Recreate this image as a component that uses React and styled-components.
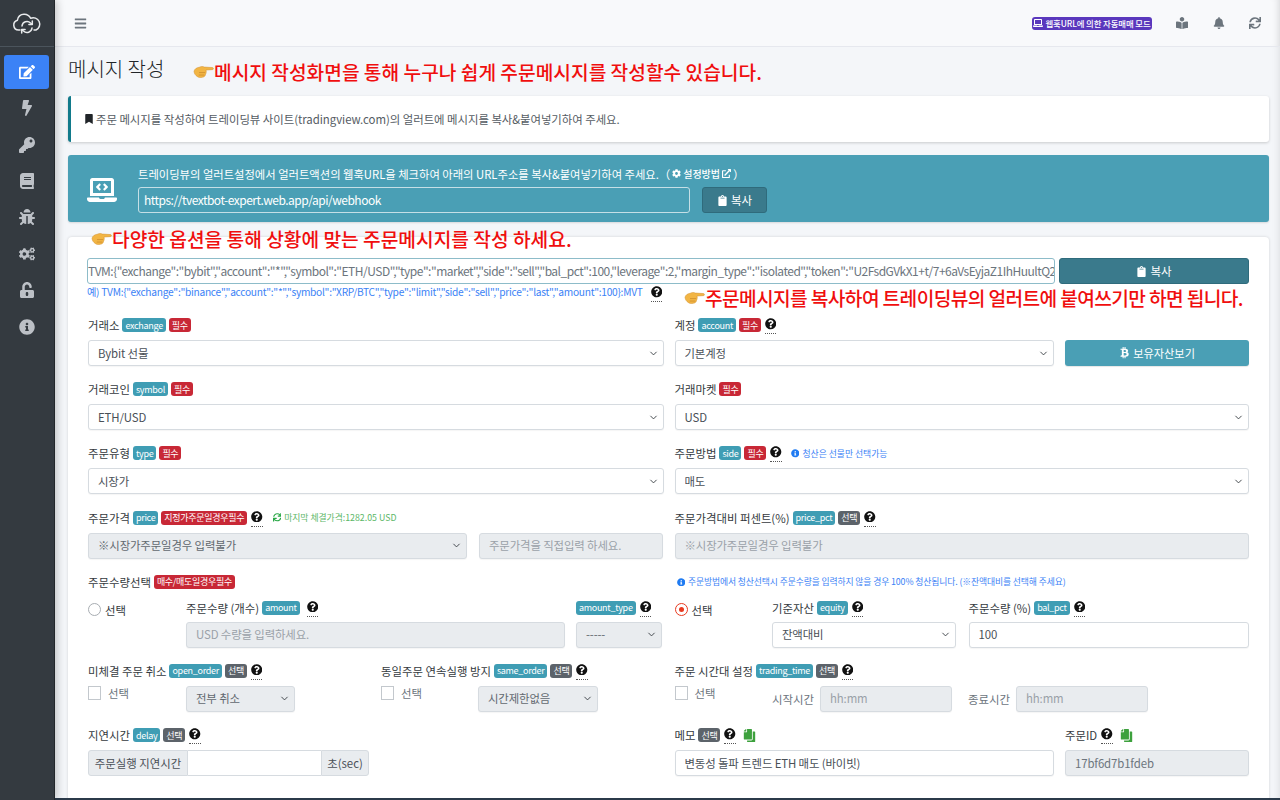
import React from "react";
import styled, { createGlobalStyle } from "styled-components";
import {
  FaBars, FaBell, FaBook, FaBolt, FaBookmark, FaBookReader, FaBtc, FaBug, FaClipboard, FaCog, FaCogs, FaCopy,
  FaEdit, FaExternalLinkAlt, FaInfoCircle, FaKey, FaLaptop, FaLaptopCode, FaQuestionCircle, FaSync, FaUnlockAlt,
} from "react-icons/fa";

const FONT = `"Noto Sans CJK KR", "Noto Sans", sans-serif`;
const CHEVRON = `url("data:image/svg+xml,%3Csvg xmlns='http://www.w3.org/2000/svg' viewBox='0 0 16 16'%3E%3Cpath fill='none' stroke='%23343a40' stroke-linecap='round' stroke-linejoin='round' stroke-width='1.6' d='M3 5.5l5 5 5-5'/%3E%3C/svg%3E")`;

const Global = createGlobalStyle`
  * { box-sizing: border-box; }
  html, body { margin: 0; height: 100%; overflow: hidden; }
  body { font-family: ${FONT}; color: #343a40; background: #f4f6f9; }
`;

const Shell = styled.div`
  display: flex; width: 1280px; height: 800px; overflow: hidden;
`;
const Sidebar = styled.aside`
  width: 55px; flex: none; background: #343a40; border-right: 1px solid #23272b;
  display: flex; flex-direction: column; align-items: center;
  box-shadow: 2px 0 8px rgba(0,0,0,.22); z-index: 2;
`;
const Logo = styled.div`
  width: 100%; height: 47px; display: flex; align-items: center; justify-content: center;
  border-bottom: 1px solid #4b545c;
`;
const Nav = styled.nav`
  display: flex; flex-direction: column; align-items: flex-start; padding: 8px 0 0 4px; width: 100%;
`;
const NavItem = styled.div`
  width: 45px; height: ${p => (p.$active ? 34 : 36.4)}px; border-radius: 3px;
  margin-bottom: ${p => (p.$active ? 1 : 0)}px;
  display: flex; align-items: center; justify-content: center; font-size: 16px;
  background: ${p => (p.$active ? "#3b82f6" : "transparent")};
  color: ${p => (p.$active ? "#fff" : "#bcc0c6")};
`;
const Main = styled.div`
  flex: 1; min-width: 0; display: flex; flex-direction: column; position: relative;
`;
const Topbar = styled.header`
  height: 47px; flex: none; background: #f8f9fb; border-bottom: 1px solid #e6e8ee;
  display: flex; align-items: center; padding: 0 19px 0 19px; color: #6c757d;
  box-shadow: inset -8px 0 8px -8px rgba(0,0,0,.18);
`;
const Burger = styled.div`
  font-size: 13px; display: flex; margin-right: auto;
`;
const ModeBadge = styled.span`
  display: inline-flex; align-items: center; gap: 2px; height: 13px; width: 120px; justify-content: center;
  border-radius: 3px; background: #5a38bd; color: #fff; font-size: 8.4px; font-weight: 500; white-space: nowrap;
  margin-right: 24px; letter-spacing: -.1px; overflow: hidden;
  svg { font-size: 10px; flex: none; }
`;
const TopIcon = styled.span`
  font-size: 12px; display: flex; margin-left: ${p => p.$gap || 0}px; color: #6c757d;
`;
const Content = styled.main`
  flex: 1; min-height: 0; overflow: hidden; padding: 0 11px 0 13px;
  box-shadow: inset -8px 0 8px -8px rgba(0,0,0,.12);
`;
const TitleRow = styled.div`
  height: 49px; display: flex; align-items: center; padding-top: 1px;
`;
const Title = styled.h1`
  margin: 0 31px 0 0; font-size: 20px; font-weight: 300; color: #212529; line-height: 1; width: 94px; white-space: nowrap;
  position: relative; top: -3px;
`;
const Note = styled.div`
  display: flex; align-items: center; color: #f00e0e; font-size: 19.2px; font-weight: 500; line-height: 24px;
  white-space: nowrap; letter-spacing: ${p => p.$ls || 0}px;
`;
const OverNote = styled(Note)`
  position: absolute; left: ${p => p.$x}px; top: ${p => p.$y}px; z-index: 1;
`;
const Callout = styled.div`
  height: 46px; background: #fff; border-left: 3px solid #117a8b; border-radius: 3px;
  box-shadow: 0 1px 3px rgba(0,0,0,.18); display: flex; align-items: center; gap: 2px; padding-left: 13px;
  font-size: 11.4px; color: #555c63; letter-spacing: -.03px;
`;
const BookmarkIcon = styled.span`
  display: flex; font-size: 10px; color: #212529;
`;
const Banner = styled.section`
  margin-top: 13px; height: 67px; background: #4a9fb5; border-radius: 3px; color: #fff;
  display: flex; align-items: center; box-shadow: 0 1px 2px rgba(0,0,0,.12);
`;
const BannerIcon = styled.div`
  width: 70px; display: flex; justify-content: center; font-size: 30px; flex: none; padding-right: 3px; padding-top: 2px;
`;
const BannerBody = styled.div`
  display: flex; flex-direction: column; gap: 6px; padding-top: 2px;
`;
const BannerText = styled.div`
  display: flex; align-items: center; gap: 2px; height: 15px; font-size: 11.3px; white-space: nowrap;
`;
const Small = styled.span`
  display: inline-flex; align-items: center; gap: 2px; font-size: 10px; font-weight: 500;
  svg { font-size: 9px; }
`;
const BannerRow = styled.div`
  display: flex; gap: 12px;
`;
const UrlBox = styled.input`
  display: block; width: 552px; height: 26px; background: transparent; border: 1px solid #c5dfe6; border-radius: 3px;
  color: #fff; font: 12px ${FONT}; letter-spacing: -.5px; padding: 0 5px 2px; outline: none;
`;
const DarkButton = styled.button`
  height: ${p => p.$h || 26}px; width: ${p => p.$w}px; background: #3a7a8c; border: 1px solid #2f6b7c; border-radius: 3px;
  color: #fff; font: 11.5px ${FONT}; display: flex; align-items: center; justify-content: center; gap: 3px; padding: 0;
  svg { font-size: 11px; }
`;
const Card = styled.section`
  position: relative; margin-top: 15px; background: #fff; border-radius: 4px 4px 0 0;
  box-shadow: 0 0 3px rgba(0,0,0,.15); padding: 21px 20px 30px 19px; height: 600px;
`;
const MessageRow = styled.div`
  display: flex; gap: 4px;
`;
const MessageBox = styled.input`
  display: block; width: 968px; height: 26px; border: 1px solid #8dbcc9; border-radius: 3px; background: #fff;
  color: #6c757d; font: 12px ${FONT}; letter-spacing: -.5px; padding: 0 0 2px 0; outline: none;
`;
const Example = styled.div`
  height: 33px; display: flex; align-items: flex-start; gap: 7px; padding-top: 1px;
  color: #3b82f6; font-size: 10.2px; letter-spacing: -.28px; line-height: 14px; white-space: nowrap;
`;
const TwoCols = styled.div`
  display: grid; grid-template-columns: 575.5px 574.5px; column-gap: 11px; row-gap: 15.2px; padding-left: 1px;
`;
const Label = styled.div`
  height: 16px; margin-bottom: ${p => p.$mb ?? 7}px; display: flex; align-items: center; gap: 3px;
  font-size: 11.4px; color: #343a40; white-space: nowrap;
`;
const Badge = styled.span`
  display: inline-flex; align-items: center; height: 14px; padding: 0 3px; border-radius: 3px;
  font-size: 9px; font-weight: 400; color: #fff; line-height: 1; white-space: nowrap; letter-spacing: -.3px;
  background: ${p => ({ info: "#3f9db4", req: "#c82836", opt: "#5c636a" }[p.$kind])};
`;
const Help = styled.span`
  display: inline-flex; height: 16px; padding-top: 1px; margin-left: ${p => p.$ml || 1}px; font-size: 11.5px; color: #111;
  position: relative;
  &::after {
    content: ""; position: absolute; left: 0; right: 0; top: 16px; border-bottom: 1px dotted #555;
  }
`;
const Hint = styled.span`
  display: inline-flex; align-items: center; gap: 3px; margin-left: ${p => p.$ml || 6}px; font-size: 8.8px;
  color: ${p => (p.$green ? "#5cb767" : "#3b82f6")};
  svg { font-size: 8.5px; color: ${p => (p.$green ? "#28a745" : "#1f7bf2")}; }
`;
const control = `
  display: block; height: 26px; width: 100%; border: 1px solid #d6dbe0; border-radius: 3px; color: #495057;
  font: 11.4px ${FONT}; letter-spacing: -.12px; padding: 0 9px 1px; outline: none; box-shadow: 0 1px 1px rgba(0,0,0,.04);
`;
const Select = styled.select`
  ${control}
  appearance: none; -webkit-appearance: none; padding-right: 20px; opacity: 1;
  background: ${CHEVRON} no-repeat right 5px center / 9px 9px ${p => (p.disabled ? "#e9ecef" : "#fff")};
  &:disabled { color: #62696f; }
`;
const Input = styled.input`
  ${control}
  background: ${p => (p.disabled ? "#e9ecef" : "#fff")};
  &:disabled { color: #6c757d; }
  &::placeholder { color: #9aa1a8; opacity: 1; }
`;
const Split = styled.div`
  display: grid; grid-template-columns: ${p => p.$cols}; column-gap: ${p => p.$gap}px;
`;
const InfoButton = styled.button`
  height: 26px; background: #4a9fb5; border: none; border-radius: 3px; color: #fff;
  font: 11.2px ${FONT}; display: flex; align-items: center; justify-content: center; gap: 3px;
  box-shadow: 0 1px 1px rgba(0,0,0,.1);
`;
const QtyNote = styled.div`
  height: 16px; margin-bottom: 10px; display: flex; align-items: center; gap: 3px; color: #3b82f6; font-size: 8.8px;
  padding-left: 2px; white-space: nowrap; letter-spacing: -.1px;
  svg { font-size: 8.5px; color: #1f7bf2; }
`;
const Choice = styled.label`
  display: flex; align-items: flex-start; gap: ${p => p.$gap || 4}px; font-size: 11.4px; color: ${p => p.$muted ? "#6c757d" : "#343a40"}; line-height: 14px; padding-top: ${p => p.$top || 0}px;
`;
const Radio = styled.span`
  width: 13px; height: 13px; border-radius: 50%; flex: none; display: flex; align-items: center; justify-content: center;
  border: ${p => (p.$on ? "1.5px solid #e8391f" : "1px solid #a8adb2")}; background: #fff;
  &::after { content: ""; width: 5px; height: 5px; border-radius: 50%; background: ${p => (p.$on ? "#e8391f" : "transparent")}; }
`;
const Check = styled.span`
  width: 13px; height: 14px; flex: none; border: 1px solid #c3c8cd; background: #fff;
`;
const Controls = styled.div`
  display: flex; align-items: flex-start;
`;
const ChoiceSlot = styled.div`
  width: ${p => p.$w}px; flex: none;
`;
const InlineLabel = styled.span`
  font-size: 11.4px; color: #6c757d; white-space: nowrap; height: 26px; display: flex; align-items: center;
  width: ${p => p.$w}px; flex: none; padding-left: ${p => p.$pl || 0}px;
`;
const SizedSelect = styled(Select)` width: ${p => p.$w}px; flex: none; `;
const SizedInput = styled(Input)` width: ${p => p.$w}px; flex: none; `;
const Group = styled.div`
  display: flex; width: 281px; height: 26px;
`;
const Addon = styled.span`
  width: ${p => p.$w}px; flex: none; background: #e9ecef; border: 1px solid #d6dbe0; color: #495057; font-size: 11.4px;
  display: flex; align-items: center; justify-content: center; white-space: nowrap;
  border-radius: ${p => (p.$end ? "0 3px 3px 0" : "3px 0 0 3px")};
`;
const GroupInput = styled.input`
  flex: 1; min-width: 0; border: 1px solid #d6dbe0; border-width: 1px 0; outline: none; background: #fff;
`;
const CopyIcon = styled.span`
  display: inline-flex; font-size: 13px; color: #3da13d; margin-left: 4px; transform: scaleX(-1);
`;
const OffsetCell = styled.div`
  margin-left: ${p => p.$ml}px;
`;
const BottomLine = styled.div`
  height: 2px; flex: none; background: #2b3a4a;
`;

const CloudLogo = () => (
  <svg width="30" height="24" viewBox="0 0 30 24" fill="none" stroke="#e8eaec" strokeWidth="1.5" strokeLinecap="round" strokeLinejoin="round">
    <path d="M8 19H6.500A5 5 0 0 1 5.400 9.200 6.500 6.500 0 0 1 12 3.200a7 7 0 0 1 6.600 4.100 5.800 5.800 0 0 1 5.400 11.700H22" />
    <path d="M10 15a5 5 0 0 1 8.500-3l1.500 1.200" />
    <path d="M20.300 10v3.400h-3.400" />
    <path d="M20 17a5 5 0 0 1-8.500 3L10 18.800" />
    <path d="M9.700 22v-3.400h3.400" />
  </svg>
);
const HandPoint = ({ w = 21 }) => (
  <svg width={w} height={w * 0.72} viewBox="0 0 21 15" style={{ flex: "none" }}>
    <path d="M1 7.200C1.600 4.900 3.600 3.600 6.200 3.200 8 2.300 10 2.200 11.400 3l8 .5c1.300.1 1.400 2 0 2.100L13 6c.4 1.200.3 3-.4 4.200-.3 1.800-1.600 2.900-3.400 3-1.700.5-3.900.2-5-.8C2.500 11.400 1.200 9.500 1 7.200Z" fill="#f2b544" stroke="#d08f2c" strokeWidth=".5" />
    <path d="M6 8.500h6M5.800 11h5.500" stroke="#c98a2b" strokeWidth=".7" fill="none" />
  </svg>
);

const Tip = ({ ml }) => <Help $ml={ml}><FaQuestionCircle /></Help>;

const NAV = [FaBolt, FaKey, FaBook, FaBug, FaCogs, FaUnlockAlt, FaInfoCircle];
const MESSAGE = `TVM:{"exchange":"bybit","account":"*","symbol":"ETH/USD","type":"market","side":"sell","bal_pct":100,"leverage":2,"margin_type":"isolated","token":"U2FsdGVkX1+t/7+6aVsEyjaZ1IhHuultQ2x9"}:MVT`;
const EXAMPLE = `예) TVM:{"exchange":"binance","account":"*","symbol":"XRP/BTC","type":"limit","side":"sell","price":"last","amount":100}:MVT`;

const Field = ({ children, label }) => (
  <div>
    <Label>{label}</Label>
    {children}
  </div>
);
const Opt = ({ value }) => <option>{value}</option>;

export default function App() {
  return (
    <Shell>
      <Global />
      <Sidebar>
        <Logo><CloudLogo /></Logo>
        <Nav>
          <NavItem $active><FaEdit /></NavItem>
          {NAV.map((Icon, i) => <NavItem key={i}><Icon /></NavItem>)}
        </Nav>
      </Sidebar>
      <Main>
        <Topbar>
          <Burger><FaBars /></Burger>
          <ModeBadge><FaLaptop />웹훅URL에 의한 자동매매 모드</ModeBadge>
          <TopIcon><FaBookReader /></TopIcon>
          <TopIcon $gap={25}><FaBell /></TopIcon>
          <TopIcon $gap={24}><FaSync /></TopIcon>
        </Topbar>
        <Content>
          <TitleRow>
            <Title>메시지 작성</Title>
            <Note><HandPoint />메시지 작성화면을 통해 누구나 쉽게 주문메시지를 작성할수 있습니다.</Note>
          </TitleRow>
          <Callout>
            <BookmarkIcon><FaBookmark /></BookmarkIcon>
            주문 메시지를 작성하여 트레이딩뷰 사이트(tradingview.com)의 얼러트에 메시지를 복사&붙여넣기하여 주세요.
          </Callout>
          <Banner>
            <BannerIcon><FaLaptopCode /></BannerIcon>
            <BannerBody>
              <BannerText>
                트레이딩뷰의 얼러트설정에서 얼러트액션의 웹훅URL을 체크하여 아래의 URL주소를 복사&붙여넣기하여 주세요.（
                <Small><FaCog />설정방법<FaExternalLinkAlt /></Small>）
              </BannerText>
              <BannerRow>
                <UrlBox readOnly value="https://tvextbot-expert.web.app/api/webhook" />
                <DarkButton $w={65}><FaClipboard />복사</DarkButton>
              </BannerRow>
            </BannerBody>
          </Banner>
          <Card>
            <OverNote $x={23} $y={-10}><HandPoint />다양한 옵션을 통해 상황에 맞는 주문메시지를 작성 하세요.</OverNote>
            <OverNote $x={616} $y={49} $ls={-0.63}><HandPoint />주문메시지를 복사하여 트레이딩뷰의 얼러트에 붙여쓰기만 하면 됩니다.</OverNote>
            <MessageRow>
              <MessageBox readOnly value={MESSAGE} />
              <DarkButton $w={190}><FaClipboard />복사</DarkButton>
            </MessageRow>
            <Example>{EXAMPLE}<Tip ml={1} /></Example>
            <TwoCols>
              <Field label={<>거래소 <Badge $kind="info">exchange</Badge><Badge $kind="req">필수</Badge></>}>
                <Select defaultValue="Bybit 선물"><Opt value="Bybit 선물" /></Select>
              </Field>
              <Field label={<>계정 <Badge $kind="info">account</Badge><Badge $kind="req">필수</Badge><Tip /></>}>
                <Split $cols="379px 184px" $gap={11.5}>
                  <Select><Opt value="기본계정" /></Select>
                  <InfoButton><FaBtc />보유자산보기</InfoButton>
                </Split>
              </Field>

              <Field label={<>거래코인 <Badge $kind="info">symbol</Badge><Badge $kind="req">필수</Badge></>}>
                <Select><Opt value="ETH/USD" /></Select>
              </Field>
              <Field label={<>거래마켓 <Badge $kind="req">필수</Badge></>}>
                <Select><Opt value="USD" /></Select>
              </Field>

              <Field label={<>주문유형 <Badge $kind="info">type</Badge><Badge $kind="req">필수</Badge></>}>
                <Select><Opt value="시장가" /></Select>
              </Field>
              <Field label={<>주문방법 <Badge $kind="info">side</Badge><Badge $kind="req">필수</Badge><Tip /><Hint><FaInfoCircle />청산은 선물만 선택가능</Hint></>}>
                <Select><Opt value="매도" /></Select>
              </Field>

              <Field label={<>주문가격 <Badge $kind="info">price</Badge><Badge $kind="req">지정가주문일경우필수</Badge><Tip /><Hint $green $ml={7}><FaSync />마지막 체결가격:1282.05 USD</Hint></>}>
                <Split $cols="379px 184px" $gap={12}>
                  <Select disabled><Opt value="※시장가주문일경우 입력불가" /></Select>
                  <Input disabled placeholder="주문가격을 직접입력 하세요." />
                </Split>
              </Field>
              <Field label={<>주문가격대비 퍼센트(%) <Badge $kind="info">price_pct</Badge><Badge $kind="opt">선택</Badge><Tip /></>}>
                <Input disabled placeholder="※시장가주문일경우 입력불가" />
              </Field>

              <div>
                <Label $mb={10}>주문수량선택 <Badge $kind="req">매수/매도일경우필수</Badge></Label>
                <Split $cols="98px 379px 97px" $gap={0}>
                  <Choice $top={3}><Radio />선택</Choice>
                  <div>
                    <Label $mb={6}>주문수량 (개수) <Badge $kind="info">amount</Badge><Tip ml={4} /></Label>
                    <Input disabled placeholder="USD 수량을 입력하세요." />
                  </div>
                  <OffsetCell $ml={11}>
                    <Label $mb={6}><Badge $kind="info">amount_type</Badge><Tip /></Label>
                    <Select disabled><Opt value="-----" /></Select>
                  </OffsetCell>
                </Split>
              </div>
              <div>
                <QtyNote><FaInfoCircle />주문방법에서 청산선택시 주문수량을 입력하지 않을 경우 100% 청산됩니다. (※잔액대비를 선택해 주세요)</QtyNote>
                <Split $cols="97.5px 184px 293px" $gap={0}>
                  <Choice $top={3}><Radio $on />선택</Choice>
                  <div>
                    <Label $mb={6}>기준자산 <Badge $kind="info">equity</Badge><Tip /></Label>
                    <Select><Opt value="잔액대비" /></Select>
                  </div>
                  <OffsetCell $ml={12.5}>
                    <Label $mb={6}>주문수량 (%) <Badge $kind="info">bal_pct</Badge><Tip /></Label>
                    <Input readOnly value="100" />
                  </OffsetCell>
                </Split>
              </div>

              <Split $cols="293px 282px" $gap={0}>
                <Field label={<>미체결 주문 취소 <Badge $kind="info">open_order</Badge><Badge $kind="opt">선택</Badge><Tip /></>}>
                  <Controls>
                    <ChoiceSlot $w={98}><Choice $gap={7} $muted><Check />선택</Choice></ChoiceSlot>
                    <SizedSelect disabled $w={109}><Opt value="전부 취소" /></SizedSelect>
                  </Controls>
                </Field>
                <Field label={<>동일주문 연속실행 방지 <Badge $kind="info">same_order</Badge><Badge $kind="opt">선택</Badge><Tip /></>}>
                  <Controls>
                    <ChoiceSlot $w={97}><Choice $gap={7} $muted><Check />선택</Choice></ChoiceSlot>
                    <SizedSelect disabled $w={120}><Opt value="시간제한없음" /></SizedSelect>
                  </Controls>
                </Field>
              </Split>
              <Field label={<>주문 시간대 설정 <Badge $kind="info">trading_time</Badge><Badge $kind="opt">선택</Badge><Tip /></>}>
                <Controls>
                  <ChoiceSlot $w={97.5}><Choice $gap={7} $muted><Check />선택</Choice></ChoiceSlot>
                  <InlineLabel $w={48}>시작시간</InlineLabel>
                  <SizedInput disabled $w={132} placeholder="hh:mm" />
                  <InlineLabel $w={64} $pl={16}>종료시간</InlineLabel>
                  <SizedInput disabled $w={132} placeholder="hh:mm" />
                </Controls>
              </Field>

              <Field label={<>지연시간 <Badge $kind="info">delay</Badge><Badge $kind="opt">선택</Badge><Tip /></>}>
                <Group>
                  <Addon $w={100}>주문실행 지연시간</Addon>
                  <GroupInput />
                  <Addon $w={48} $end>초(sec)</Addon>
                </Group>
              </Field>
              <Split $cols="379px 184px" $gap={11.5}>
                <Field label={<>메모 <Badge $kind="opt">선택</Badge><Tip /><CopyIcon><FaCopy /></CopyIcon></>}>
                  <Input readOnly value="변동성 돌파 트렌드 ETH 매도 (바이빗)" />
                </Field>
                <Field label={<>주문ID <Tip /><CopyIcon><FaCopy /></CopyIcon></>}>
                  <Input disabled value="17bf6d7b1fdeb" />
                </Field>
              </Split>
            </TwoCols>
          </Card>
        </Content>
        <BottomLine />
      </Main>
    </Shell>
  );
}
